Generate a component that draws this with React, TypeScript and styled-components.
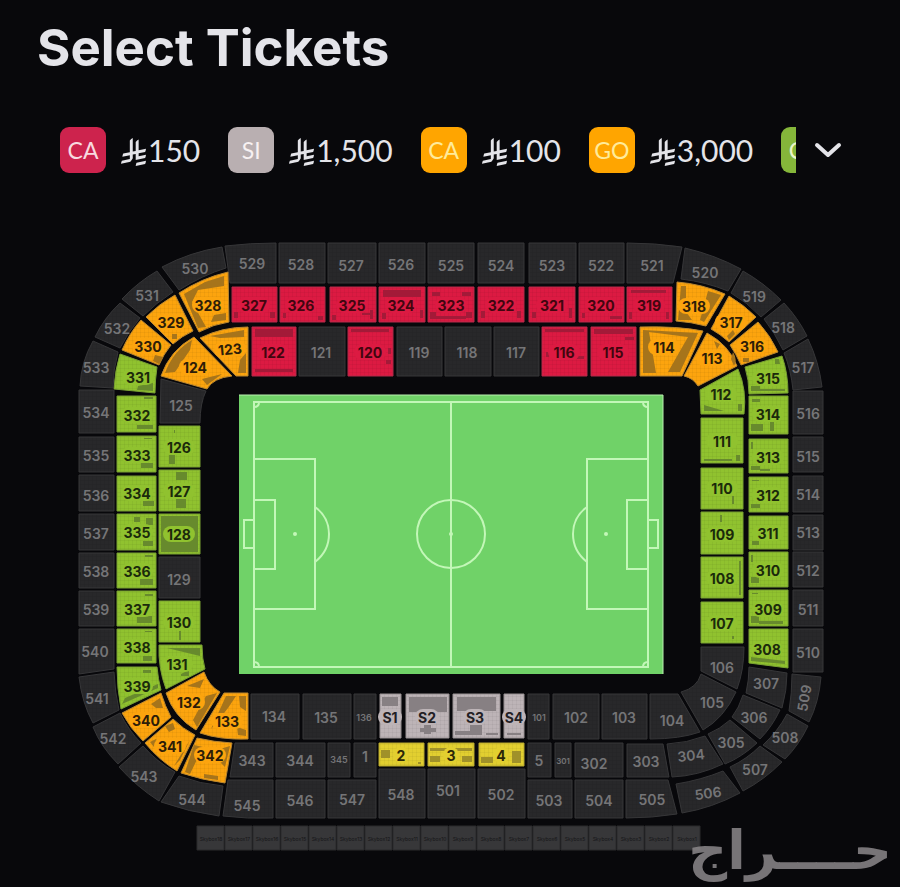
import React from "react";
import styled, { createGlobalStyle } from "styled-components";

const GlobalStyle = createGlobalStyle`
  *, *::before, *::after { box-sizing: border-box; }
  body { margin: 0; background: #08080b; color: #e6e6ea; font-family: Inter, sans-serif; }
`;

const Page = styled.main`
  position: relative;
  min-height: 100vh;
  overflow: hidden;
  background: #08080b;
`;

const Header = styled.header`
  display: flex;
  flex-direction: column;
  gap: 47px;
  padding: 16px 56px 57px 37px;
`;

const Title = styled.h1`
  margin: 0;
  font: 700 51px/64px Inter, sans-serif;
  color: #e4e4e9;
`;

const Prices = styled.div`
  display: flex;
  align-items: center;
  gap: 16px;
  padding-left: 23px;
`;

const PriceList = styled.div`
  display: flex;
  flex: 1;
  min-width: 0;
  gap: 28px;
  overflow: hidden;
`;

const PriceButton = styled.button`
  display: flex;
  flex: none;
  align-items: center;
  gap: 15px;
  padding: 0;
  border: 0;
  background: none;
  color: #e4e4e9;
  cursor: pointer;
`;

const Badge = styled.span<{ $color: string; $ink: string }>`
  display: grid;
  place-items: center;
  width: 46px;
  height: 46px;
  border-radius: 9px;
  background: ${(p) => p.$color};
  color: ${(p) => p.$ink};
  font: 400 23px/46px Lato, sans-serif;
`;

const Amount = styled.span`
  display: flex;
  align-items: center;
  gap: 2px;
  font: 400 30px/44px Lato, sans-serif;
`;

const RiyalSvg = styled.svg`
  width: 25px;
  height: 28px;
  margin-top: 4px;
  fill: currentColor;
`;

const Expand = styled.button`
  display: grid;
  place-items: center;
  width: 32px;
  height: 46px;
  padding: 0;
  border: 0;
  background: none;
  color: #e4e4e9;
  cursor: pointer;
`;

const MapSvg = styled.svg`
  display: block;
  width: 100%;
  height: auto;
  font-family: Inter, sans-serif;
`;

const Watermark = styled.div`
  position: absolute;
  right: 8px;
  bottom: 0;
  color: #8b878a;
  opacity: 0.85;
  font: 700 54px/72px "DejaVu Sans", sans-serif;
  pointer-events: none;
`;

type Tone = "off" | "red" | "green" | "orange" | "yellow" | "silver";

const tones: Record<Tone, { fill: string; edge: string; shade: string; ink: string }> = {
  off: { fill: "#28282a", edge: "#363638", shade: "#202022", ink: "#757577" },
  red: { fill: "#dc1a42", edge: "#b32a4a", shade: "#a31a38", ink: "#42060f" },
  green: { fill: "#90c22f", edge: "#78a033", shade: "#678a2d", ink: "#1b2a0b" },
  orange: { fill: "#fca40e", edge: "#b98630", shade: "#a6741b", ink: "#2d1d08" },
  yellow: { fill: "#e2cf30", edge: "#b5a62e", shade: "#a09129", ink: "#2b2708" },
  silver: { fill: "#bdb4b7", edge: "#989193", shade: "#878083", ink: "#222024" },
};

interface Section {
  id: string;
  d: string;
  x: number;
  y: number;
  tone: Tone;
  size?: number;
  turn?: number;
}

const box = (x1: number, y1: number, x2: number, y2: number) => `M${x1} ${y1}H${x2}V${y2}H${x1}Z`;

const sec = (id: string, tone: Tone, x: number, y: number, d: string, size?: number, turn?: number): Section => ({
  id, tone, x, y, d, size, turn,
});

/* A straight run of stands that shares its top and bottom edges. */
const row = (y1: number, y2: number, items: [string, Tone, number, number, number, number, number?][]) =>
  items.map(([id, tone, x1, x2, x, y, size]) => sec(id, tone, x, y, box(x1, y1, x2, y2), size));

/* A vertical run of stands that shares its left and right edges. */
const column = (x1: number, x2: number, x: number, items: [string, Tone, number, number, number][]) =>
  items.map(([id, tone, y1, y2, y]) => sec(id, tone, x, y, box(x1, y1, x2, y2)));

const sections: Section[] = [
  /* upper tier, top */
  sec("529", "off", 252, 263, "M225 246Q250 243 276 243V283H230Z"),
  ...row(243, 283, [
    ["528", "off", 279, 325, 301, 264],
    ["527", "off", 328, 376, 351, 265],
    ["526", "off", 379, 425, 401, 264],
    ["525", "off", 428, 474, 451, 265],
    ["524", "off", 478, 524, 501, 265],
    ["523", "off", 529, 576, 552, 265],
    ["522", "off", 579, 624, 601, 265],
  ]),
  sec("521", "off", 652, 265, "M627 243Q655 243 682 247L673 283H627Z"),
  sec("520", "off", 705, 272, "M685 248Q715 255 741 269L728 291Q706 282 681 279Z"),
  sec("519", "off", 754, 296, "M743 271Q764 283 781 300L761 317Q747 302 731 293Z"),
  sec("518", "off", 783, 327, "M784 303Q798 318 807 336L783 350Q775 333 764 319Z"),
  sec("517", "off", 803, 367, "M808 339Q819 362 822 387L793 390Q791 370 784 353Z"),
  /* upper tier, right */
  ...column(793, 823, 808, [
    ["516", "off", 391, 434, 413],
    ["515", "off", 437, 472, 456],
    ["514", "off", 476, 512, 494],
    ["513", "off", 515, 550, 532],
    ["512", "off", 552, 587, 570],
    ["511", "off", 590, 626, 609],
    ["510", "off", 629, 672, 652],
  ]),
  sec("509", "off", 804, 698, "M792 674L821 677Q819 702 809 722L789 711Q792 693 792 674Z", 14, -80),
  sec("508", "off", 785, 737, "M787 714L808 726Q799 745 785 759L763 745Q778 731 787 714Z"),
  sec("507", "off", 755, 769, "M760 746L782 762Q764 780 743 791L730 767Q747 759 760 746Z"),
  sec("506", "off", 708, 793, "M723 771L740 793Q712 808 682 813L676 784Q701 780 723 771Z", 14, -8),
  sec("505", "off", 652, 799, "M626 780H668L677 814Q652 818 626 818Z"),
  /* upper tier, bottom */
  ...row(780, 818, [
    ["504", "off", 575, 623, 599, 800],
    ["503", "off", 528, 572, 549, 800],
    ["547", "off", 328, 376, 352, 799],
    ["546", "off", 276, 325, 300, 800],
  ]),
  ...row(769, 818, [
    ["502", "off", 478, 525, 501, 794],
    ["501", "off", 428, 475, 448, 790],
    ["548", "off", 379, 425, 401, 794],
  ]),
  sec("545", "off", 247, 805, "M228 780H273V818Q247 819 223 816Z"),
  sec("544", "off", 192, 799, "M179 776Q200 784 223 786L219 816Q189 812 161 802Z"),
  sec("543", "off", 144, 776, "M143 746Q157 762 175 772L159 801Q137 787 119 767Z"),
  sec("542", "off", 113, 738, "M120 713Q129 731 141 743L118 764Q101 747 93 727Z"),
  sec("541", "off", 97, 698, "M79 677L114 672Q115 693 119 710L93 723Q82 703 79 677Z"),
  /* upper tier, left */
  sec("540", "off", 95, 651, "M79 629H114V669L79 674Z"),
  ...column(79, 114, 96, [
    ["539", "off", 591, 626, 609],
    ["538", "off", 553, 588, 571],
    ["537", "off", 514, 550, 533],
    ["536", "off", 475, 511, 495],
    ["535", "off", 437, 472, 455],
    ["534", "off", 390, 433, 412],
  ]),
  sec("533", "off", 96, 367, "M93 341L118 352Q113 370 113 388L80 386Q81 362 93 341Z"),
  sec("532", "off", 117, 328, "M120 303L140 318Q128 332 120 348L95 337Q104 318 120 303Z"),
  sec("531", "off", 147, 295, "M157 271L173 292Q156 303 143 316L122 299Q138 282 157 271Z"),
  sec("530", "off", 195, 268, "M162 267Q190 252 222 247L226 268Q203 275 179 290Z"),

  /* middle tier, top */
  ...row(287, 322, [
    ["327", "red", 232, 277, 254, 305],
    ["326", "red", 280, 325, 301, 305],
    ["325", "red", 330, 376, 352, 305],
    ["324", "red", 379, 425, 401, 305],
    ["323", "red", 428, 474, 451, 305],
    ["322", "red", 478, 524, 501, 305],
    ["321", "red", 529, 575, 552, 305],
    ["320", "red", 579, 624, 601, 305],
    ["319", "red", 627, 672, 649, 305],
  ]),
  sec("318", "orange", 694, 306, "M677 282Q702 284 725 294L706 326Q691 322 676 321Z"),
  sec("317", "orange", 731, 322, "M729 296Q744 305 756 317L729 342Q720 334 711 329Z"),
  sec("316", "orange", 752, 346, "M758 322Q770 335 778 352L741 365Q736 354 730 345Z"),
  sec("315", "green", 768, 378, "M745 367L782 356Q788 373 788 393L749 394Q749 380 745 367Z"),
  /* middle tier, right */
  ...column(749, 788, 768, [
    ["314", "green", 396, 434, 414],
    ["313", "green", 439, 473, 457],
    ["312", "green", 477, 512, 495],
    ["311", "green", 516, 549, 533],
    ["310", "green", 552, 587, 570],
    ["309", "green", 590, 626, 609],
  ]),
  sec("308", "green", 767, 649, "M749 629H788V668L749 663Z"),
  sec("307", "off", 766, 683, "M749 667L787 673Q787 690 782 708L746 693Q749 680 749 667Z"),
  sec("306", "off", 754, 717, "M743 695L780 710Q772 727 760 739L732 717Q739 708 743 695Z"),
  sec("305", "off", 731, 742, "M730 720L757 743Q742 757 725 764L708 734Q720 729 730 720Z"),
  sec("304", "off", 691, 755, "M667 744Q687 743 705 736L723 764Q698 776 672 777Z", 14, -6),
  sec("303", "off", 646, 761, "M627 744H663L669 777H627Z"),
  /* middle tier, bottom */
  ...row(743, 777, [
    ["302", "off", 575, 623, 594, 763],
    ["301", "off", 555, 571, 563, 761, 8],
    ["5", "off", 528, 551, 539, 760],
    ["1", "off", 354, 376, 365, 756],
    ["345", "off", 328, 350, 339, 759, 9],
    ["344", "off", 276, 325, 300, 760],
  ]),
  ...row(743, 766, [
    ["2", "yellow", 379, 424, 401, 755],
    ["3", "yellow", 428, 474, 451, 755],
    ["4", "yellow", 479, 524, 501, 755],
  ]),
  sec("343", "off", 252, 760, "M235 743H273V777H230Z"),
  sec("342", "orange", 210, 755, "M197 738Q214 742 232 743L225 783Q202 780 181 773Z"),
  sec("341", "orange", 170, 746, "M173 719Q183 729 195 735L177 771Q159 760 145 743Z"),
  sec("340", "orange", 146, 720, "M161 693Q165 706 171 717L143 741Q130 728 122 713Z"),
  sec("339", "green", 137, 686, "M117 667H157Q158 679 161 690L121 709Q117 688 117 667Z"),
  /* middle tier, left */
  ...column(117, 156, 137, [
    ["338", "green", 629, 663, 647],
    ["337", "green", 591, 626, 609],
    ["336", "green", 553, 588, 571],
    ["335", "green", 514, 550, 532],
    ["334", "green", 476, 511, 493],
    ["333", "green", 436, 472, 455],
    ["332", "green", 396, 432, 415],
  ]),
  sec("331", "green", 138, 377, "M120 354L157 367Q155 380 155 393L114 389Q115 370 120 354Z"),
  sec("330", "orange", 148, 346, "M141 320L171 345Q163 355 159 365L122 350Q130 332 141 320Z"),
  sec("329", "orange", 171, 322, "M175 295L193 331Q182 336 173 344L146 317Q159 304 175 295Z"),
  sec("328", "orange", 208, 305, "M179 293Q202 278 228 272L229 322Q214 324 199 332Z"),

  /* lower tier, top */
  sec("124", "orange", 195, 367, "M161 376Q170 350 194 337L232 376Q213 378 207 389Z"),
  sec("123", "orange", 230, 349, "M200 338Q222 327 248 327V376H236Z", 14, -5),
  ...row(327, 376, [
    ["122", "red", 252, 296, 273, 352],
    ["121", "off", 299, 345, 321, 352],
    ["120", "red", 348, 393, 370, 352],
    ["119", "off", 397, 442, 419, 352],
    ["118", "off", 445, 491, 467, 352],
    ["117", "off", 494, 539, 516, 352],
    ["116", "red", 542, 587, 564, 352],
    ["115", "red", 591, 636, 613, 352],
  ]),
  sec("114", "orange", 664, 347, "M640 327Q678 326 703 331L682 376H640Z"),
  sec("113", "orange", 712, 358, "M707 333Q729 345 737 366L698 386Q693 378 684 376Z"),
  /* lower tier, right */
  sec("112", "green", 721, 394, "M700 390L738 369Q747 390 744 414H701Z"),
  ...column(701, 743, 722, [
    ["111", "green", 418, 463, 441],
    ["110", "green", 468, 509, 488],
    ["109", "green", 512, 554, 534],
    ["108", "green", 557, 598, 578],
    ["107", "green", 602, 643, 623],
  ]),
  sec("106", "off", 722, 667, "M701 647H744Q744 670 737 689L701 671Z"),
  sec("105", "off", 712, 702, "M701 674L736 692Q724 718 703 730L681 692Q697 688 701 674Z"),
  sec("104", "off", 672, 720, "M650 694H678L700 732Q680 739 650 739Z"),
  /* lower tier, bottom */
  ...row(694, 739, [
    ["103", "off", 602, 647, 624, 717],
    ["102", "off", 553, 599, 576, 717],
    ["101", "off", 528, 549, 539, 717, 9],
    ["136", "off", 354, 376, 364, 717, 9],
    ["135", "off", 303, 351, 326, 717],
    ["134", "off", 251, 299, 274, 716],
  ]),
  ...row(694, 738, [
    ["S4", "silver", 504, 524, 514, 717],
    ["S3", "silver", 453, 500, 475, 717],
    ["S2", "silver", 406, 449, 427, 717],
    ["S1", "silver", 380, 401, 390, 717],
  ]),
  sec("133", "orange", 227, 721, "M224 693H248V739Q220 740 200 733Z"),
  sec("132", "orange", 189, 702, "M204 672Q209 686 220 692L196 730Q174 717 166 693Z"),
  sec("131", "green", 177, 664, "M159 645H202Q202 659 205 669L166 689Q158 668 159 645Z"),
  /* lower tier, left */
  ...column(159, 200, 179, [
    ["130", "green", 601, 642, 622],
    ["129", "off", 557, 598, 579],
    ["128", "green", 514, 554, 534],
    ["127", "green", 470, 511, 491],
    ["126", "green", 426, 467, 447],
  ]),
  sec("125", "off", 181, 405, "M161 379L206 391Q200 403 200 423H160Z"),
];

/* Blocks of seats that are already taken, one path for each price colour. */
const taken: [Tone, string][] = [
  ["red",
    "M234 312h4v6h-4zM270 312h5v6h-5zM283 313h3v5h-3zM318 316h5v4h-5zM332 315h4v5h-4zM362 313h8v2h-8zM370 310h3v9h-3z" +
    "M383 290h38v7h-38zM382 313h4v6h-4zM420 310h3v8h-3zM432 292h8v4h-8zM462 292h9v4h-9zM430 312h6v7h-6zM436 316h30v3h-30zM466 312h6v6h-6z" +
    "M481 311h4v7h-4zM517 311h4v7h-4zM532 312h4v6h-4zM569 308h3v10h-3zM582 313h3v5h-3zM610 316h12v3h-12zM631 290h35v3h-35zM629 312h3v7h-3zM666 312h3v7h-3z" +
    "M255 329h38v8h-38zM255 369h38v3h-38zM351 329h38v3h-38zM388 348h3v6h-3zM386 360h5v4h-5zM545 329h39v3h-39zM546 352h3v5h-3zM577 356h7v3h-7zM594 329h39v5h-39zM625 337h9v3h-9z"],
  ["green",
    "M138 386L153 383V391L137 390ZM144 397h9v2h-9zM137 425h16v4h-16zM141 463h12v5h-12zM144 438h8v1h-8zM143 501h11v5h-11zM134 517h6v5h-6zM146 518h7v7h-7zM143 541h10v5h-10z" +
    "M145 555h8v2h-8zM140 579h13v6h-13zM145 594h8v2h-8zM137 616h15v7h-15zM145 631h7v1h-7zM143 656h9v5h-9zM143 670h8v3h-8zM125 698L158 684V688L122 704Z" +
    "M169 455h6v9h-6zM174 430h1v3h-1zM176 472h11v8h-11zM176 499h10v9h-10zM161 516h37v36h-37zM179 631h2v9h-2zM167 648h33v8zM181 674l8-4v6h-8z" +
    "M704 405L724 411H704ZM738 404h4v7h-4zM704 459h28v2h-28zM736 455h4v6h-4zM732 496h2v8h-2zM720 515h2v7h-2zM739 561h2v34h-2zM732 636h2v3h-2z" +
    "M751 386h9v5h-9zM760 389h25v2h-25zM775 359h4l1 5h-5zM752 399h8v3h-8zM751 424h12v7h-12zM770 422h4v9h-4zM751 442h2v7h-2zM751 466h9v4h-9zM760 469h10v2h-10zM752 480h7v1h-7zM751 504h9v4h-9z" +
    "M752 541h7v4h-7zM751 555h2v7h-2zM751 577h8v6h-8zM752 593h6v1h-6zM751 616h8v7h-8zM759 621h24v3h-24zM751 657L785 661V664L751 661Z"],
  ["orange",
    "M184 294L205 282L224 276V286L198 290L192 302L206 327L198 328ZM214 315L226 313V320L211 322ZM172 334h5v5h-5zM155 355l8 2l-4 7l-6-3z" +
    "M165 373Q173 351 192 340L190 350L175 372ZM210 336L244 330V337L220 338ZM240 360L246 353V373L238 373ZM202 379L222 374L207 385Z" +
    "M681 286h5v26l6 8h-14zM708 291L721 295L704 322L700 320ZM727 336l6-6l2 4l-6 6zM743 358h6v4h-6z" +
    "M643 330L698 333L680 372H668L688 337L649 332L656 373H643ZM733 352Q738 360 734 366L731 359ZM714 341l6 3l-3 5z" +
    "M187 686L204 679L200 688ZM206 696L217 693L197 727L193 720ZM226 696L236 696L228 708L217 722L211 729ZM239 696H246V711L240 707ZM237 727L246 730V736L238 735Z" +
    "M151 704L160 698L163 708L156 708ZM165 726l8-3l2 6l-6 3zM180 760L190 740L174 766ZM150 742l6-3l3 6l-5 2z" +
    "M194 745L203 747L190 774L185 772ZM220 749L230 746L225 767L220 762ZM204 774l14 2v4l-14-2z"],
  ["yellow", "M381 750h9v8h-9zM418 762h3v2h-3zM430 748h42v3h-42zM430 756h10v6h-10zM462 756h10v6h-10zM481 757h12v6h-12zM512 751h9v12h-9z"],
  ["silver", "M382 697h16v9h-16zM409 697h38v15h-38zM457 697h39v14h-39zM424 725h7v9h-7zM420 728h16v4h-16zM455 731h15v4h-15zM470 725h12v10h-12zM486 733h12v2h-12zM507 733h14v2h-14z"],
];

const skyboxes = Array.from({ length: 18 }, (_, i) => ({ name: `Skybox${18 - i}`, x: 197 + i * 28 }));

const prices = [
  { code: "CA", amount: "150", color: "#cd234d", ink: "#f8d9df" },
  { code: "SI", amount: "1,500", color: "#b9afb1", ink: "#f7f1f2" },
  { code: "CA", amount: "100", color: "#ffa500", ink: "#ffeb9a" },
  { code: "GO", amount: "3,000", color: "#ffa500", ink: "#ffeb9a" },
  { code: "CA", amount: "200", color: "#85b63a", ink: "#e9f5c9" },
];

const Riyal = () => (
  <RiyalSvg viewBox="0 0 1124 1256" role="img" aria-label="SAR">
    <path d="M699.62 1113.02c-20.06 44.48-33.32 92.75-38.4 143.37l424.51-90.24c20.06-44.47 33.31-92.75 38.4-143.37l-424.51 90.24Z" />
    <path d="M1085.73 895.8c20.06-44.47 33.32-92.75 38.4-143.37l-330.68 70.33v-135.2l292.27-62.11c20.06-44.47 33.32-92.75 38.4-143.37l-330.68 70.27V66.13c-50.67 28.45-95.67 66.32-132.25 110.99v403.35l-132.25 28.11V0c-50.67 28.44-95.67 66.32-132.25 110.99v525.69l-295.91 62.88c-20.06 44.47-33.33 92.75-38.42 143.37l334.33-71.05v170.26l-358.3 76.14c-20.06 44.47-33.32 92.75-38.4 143.37l375.04-79.7c30.53-6.35 56.77-24.4 73.83-49.24l68.78-101.97v-.02c7.14-10.55 11.3-23.27 11.3-36.97v-149.98l132.25-28.11v270.4l424.53-90.28Z" />
  </RiyalSvg>
);

const SectionShape = ({ section }: { section: Section }) => {
  const tone = tones[section.tone];
  return (
    <g>
      <path d={section.d} fill={tone.fill} />
      <path d={section.d} fill="url(#seats)" stroke={tone.edge} strokeWidth="1" strokeLinejoin="round" />
    </g>
  );
};

const SectionLabel = ({ section }: { section: Section }) => {
  const tone = tones[section.tone];
  const size = section.size ?? 14;
  const half = section.id.length * 4 + 4;
  return (
    <g transform={section.turn ? `rotate(${section.turn} ${section.x} ${section.y})` : undefined}>
      {section.tone !== "off" && (
        <rect x={section.x - half} y={section.y - 8} width={half * 2} height="16" rx="8" fill={tone.fill} />
      )}
      <text
        x={section.x}
        y={section.y}
        fill={tone.ink}
        fontSize={size}
        fontWeight={section.tone === "off" ? 600 : 700}
        textAnchor="middle"
        dominantBaseline="central"
      >
        {section.id}
      </text>
    </g>
  );
};

const Pitch = () => (
  <g>
    <path d="M239 395H663V674H239Z" fill="#70d268" />
    <path d="M239 395H663V674" fill="none" stroke="#b9efb0" />
    <g fill="none" stroke="#c3f7b8" strokeWidth="2">
      <path d="M254 402H648V667H254ZM451 402V667" />
      <circle cx="451" cy="534" r="34" />
      <path d="M254 459H315V609H254M254 500H275V569H254M254 520H244V548H254M315 507Q329 517 329 534T315 562" />
      <path d="M648 459H587V609H648M648 500H627V569H648M648 520H658V548H648M587 507Q573 517 573 534T587 562" />
      <path d="M254 407Q259 407 259 402M643 402Q643 407 648 407M254 662Q259 662 259 667M643 667Q643 662 648 662" />
    </g>
    <g fill="#c3f7b8">
      <circle cx="295" cy="534" r="2" />
      <circle cx="451" cy="534" r="2" />
      <circle cx="606" cy="534" r="2" />
    </g>
  </g>
);

const StadiumMap = () => (
  <MapSvg viewBox="0 230 900 657" role="img" aria-label="Stadium sections">
    <defs>
      <pattern id="seats" width="4" height="4" patternUnits="userSpaceOnUse">
        <path d="M0 0H4M0 0V4" stroke="#000" strokeOpacity="0.08" />
      </pattern>
    </defs>
    {sections.map((s) => <SectionShape key={s.id} section={s} />)}
    {taken.map(([tone, d]) => <path key={tone} d={d} fill={tones[tone].shade} />)}
    {sections.map((s) => <SectionLabel key={s.id} section={s} />)}
    <Pitch />
    {skyboxes.map((s) => (
      <g key={s.name}>
        <path d={box(s.x, 826, s.x + 27, 850)} fill="#373739" stroke="#2b2b2d" />
        <text x={s.x + 14} y="839" fontSize="5" fill="#161618" textAnchor="middle" dominantBaseline="central">{s.name}</text>
      </g>
    ))}
  </MapSvg>
);

export default function App() {
  return (
    <Page>
      <GlobalStyle />
      <Header>
        <Title>Select Tickets</Title>
        <Prices>
          <PriceList>
            {prices.map((p) => (
              <PriceButton key={p.code + p.amount} type="button">
                <Badge $color={p.color} $ink={p.ink}>{p.code}</Badge>
                <Amount><Riyal />{p.amount}</Amount>
              </PriceButton>
            ))}
          </PriceList>
          <Expand type="button" aria-label="Show all prices">
            <svg width="32" height="24" viewBox="0 0 32 24" fill="none" stroke="currentColor" strokeWidth="4" strokeLinecap="round" strokeLinejoin="round">
              <path d="M5 7L16 17L27 7" />
            </svg>
          </Expand>
        </Prices>
      </Header>
      <StadiumMap />
      <Watermark lang="ar" dir="rtl">حــــراج</Watermark>
    </Page>
  );
}
